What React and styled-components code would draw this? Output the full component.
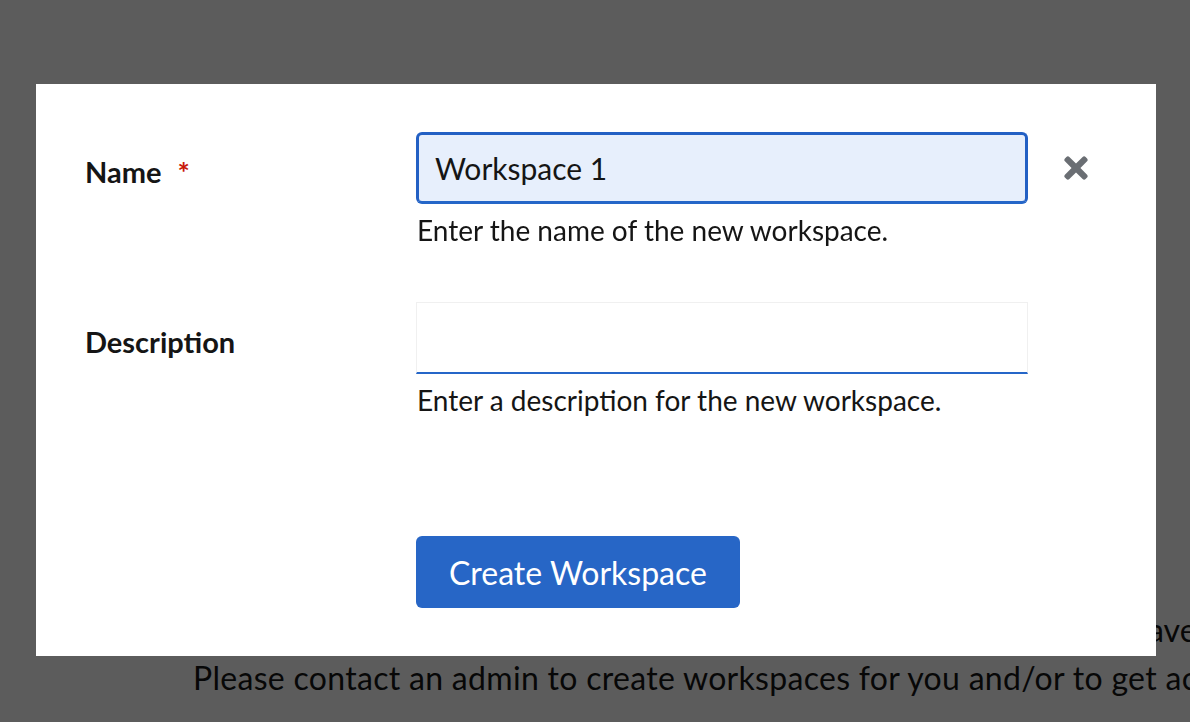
import styled, { createGlobalStyle } from "styled-components";
import { FaTimes } from "react-icons/fa";

const GlobalStyle = createGlobalStyle`
	html, body {
		margin: 0;
		padding: 0;
		background: #ffffff;
		overflow: hidden;
	}
	body {
		font-family: Lato, "Noto Sans", sans-serif;
		color: #151515;
	}
	* {
		box-sizing: border-box;
	}
`;

// страница под затемнением
const Page = styled.main`
	padding-top: 606px;
	font-size: 32px;
	line-height: 48px;
	white-space: nowrap;
`;

const FirstLine = styled.div`
	display: grid;
	grid-template-columns: 1148px auto;

	& > span:first-child {
		text-align: right;
	}
`;

const SecondLine = styled.div`
	padding-left: 193px;
	letter-spacing: 0.3px;
`;

const Backdrop = styled.div`
	position: fixed;
	inset: 0;
	background: rgba(0, 0, 0, 0.64);
	display: flex;
	justify-content: flex-start;
	align-items: flex-start;
	padding: 84px 0 0 36px;
`;

const Modal = styled.div`
	width: 1120px;
	background: #ffffff;
	padding: 48px;
	display: grid;
	grid-template-columns: 332px 612px auto;
	row-gap: 54px;
`;

const Label = styled.label`
	padding-top: 22px;
	font-size: 29px;
	line-height: 36px;
	font-weight: 700;
	color: #151515;
	margin-left: 1px;
`;

const Required = styled.span`
	color: #c9190b;
	margin-left: 16px;
`;

const Field = styled.div`
	display: flex;
	flex-direction: column;
	gap: 8px;
`;

const Input = styled.input`
	width: 612px;
	height: 72px;
	padding: 0 16px;
	font-family: inherit;
	font-size: 30px;
	color: #151515;
	outline: none;
	background: ${({ $focused }) => ($focused ? "#e7effc" : "#ffffff")};
	border-style: solid;
	border-color: ${({ $focused }) => ($focused ? "#2360c4" : "#f0f0f0")};
	border-bottom-color: #2566c8;
	border-width: ${({ $focused }) => ($focused ? "3px" : "1px 1px 2px 1px")};
	border-radius: ${({ $focused }) => ($focused ? "6px" : "0")};
	caret-color: #151515;
`;

const Helper = styled.div`
	font-size: 28px;
	line-height: 36px;
	color: #151515;
	margin-left: 1px;
`;

const CloseButton = styled.button`
	border: none;
	background: none;
	padding: 0;
	margin: 19px 0 0 36px;
	width: 24px;
	height: 34px;
	color: #6a6e73;
	display: flex;
	align-items: center;
	justify-content: center;
	cursor: pointer;
	align-self: start;
`;

const Actions = styled.div`
	grid-column: 2;
	padding-top: 64px;
`;

const PrimaryButton = styled.button`
	height: 72px;
	padding: 0 33px;
	border: none;
	border-radius: 6px;
	background: #2766c6;
	color: #ffffff;
	font-family: inherit;
	font-size: 32px;
	cursor: pointer;
`;

const Empty = styled.div``;

export default function App() {
	return (
		<>
			<GlobalStyle />
			<Page>
				<FirstLine>
					<span>It looks like you don't have any workspaces yet, or you don't h</span>
					<span>ave access to any.</span>
				</FirstLine>
				<SecondLine>
					Please contact an admin to create workspaces for you and/or to get access.
				</SecondLine>
			</Page>
			<Backdrop>
				<Modal>
					<Label>
						Name<Required>*</Required>
					</Label>
					<Field>
						<Input $focused defaultValue="Workspace 1" autoFocus />
						<Helper>Enter the name of the new workspace.</Helper>
					</Field>
					<CloseButton aria-label="Close">
						<FaTimes size={34} />
					</CloseButton>

					<Label>Description</Label>
					<Field>
						<Input />
						<Helper>Enter a description for the new workspace.</Helper>
					</Field>
					<Empty />

					<Actions>
						<PrimaryButton>Create Workspace</PrimaryButton>
					</Actions>
				</Modal>
			</Backdrop>
		</>
	);
}
